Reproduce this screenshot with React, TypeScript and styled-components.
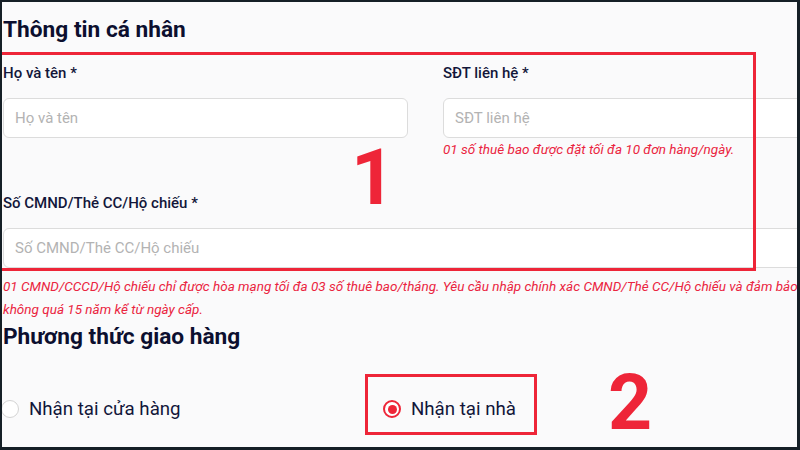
import React from 'react';
import styled, { createGlobalStyle } from 'styled-components';

const red = '#ee2538';
const navy = '#12163a';
const frame = '#151f26';

const GlobalStyle = createGlobalStyle`
  html, body {
    margin: 0;
    padding: 0;
    background: ${frame};
  }
  * {
    box-sizing: border-box;
  }
`;

const Frame = styled.div`
  width: 800px;
  height: 450px;
  background: ${frame};
  padding: 2px 3px 3px 2px;
`;

const Screen = styled.div`
  position: relative;
  height: 100%;
  background: #fafafb;
  overflow: hidden;
  padding-left: 1px;
  font-family: Roboto, 'Noto Sans', sans-serif;
  color: ${navy};
`;

const SectionTitle = styled.h2<{ $top: number }>`
  margin: ${({ $top }) => $top}px 0 0;
  font-size: 22.7px;
  line-height: 28px;
  font-weight: 700;
  color: #0c0f2f;
  white-space: nowrap;
`;

const FieldGrid = styled.div`
  display: grid;
  grid-template-columns: 405px 405px;
  column-gap: 35px;
  row-gap: 36px;
  width: 845px;
  margin-top: 19px;
`;

const Field = styled.div<{ $wide?: boolean }>`
  display: flex;
  flex-direction: column;
  grid-column: ${({ $wide }) => ($wide ? '1 / -1' : 'auto')};
`;

const Label = styled.label`
  font-size: 15px;
  line-height: 20px;
  font-weight: 500;
  margin-bottom: 15px;
  white-space: nowrap;
`;

const Input = styled.input`
  height: 40px;
  width: 100%;
  border: 1px solid #dcdcdc;
  border-radius: 6px;
  background: #fff;
  padding: 0 11px;
  font-family: Roboto, sans-serif;
  font-size: 15px;
  color: ${navy};
  outline: none;

  &::placeholder {
    color: #b3b3b3;
  }
`;

const Note = styled.p<{ $lh: number; $mt: number }>`
  margin: ${({ $mt }) => $mt}px 0 0;
  font-size: 13.5px;
  line-height: ${({ $lh }) => $lh}px;
  font-style: italic;
  color: #ea2440;
  white-space: nowrap;
`;

const RadioRow = styled.div`
  display: grid;
  grid-template-columns: 382px auto;
  margin: 46px 0 0 -2px;
`;

const RadioOption = styled.label`
  display: flex;
  align-items: center;
  gap: 10px;
  height: 24px;
  font-size: 18.7px;
  color: ${navy};
`;

const RadioDot = styled.span<{ $checked?: boolean }>`
  width: 18px;
  height: 18px;
  flex: none;
  border-radius: 50%;
  border: ${({ $checked }) => ($checked ? `2px solid ${red}` : '1.5px solid #d4d4d4')};
  background: #fff;
  display: flex;
  align-items: center;
  justify-content: center;

  &::after {
    content: '';
    width: 9px;
    height: 9px;
    border-radius: 50%;
    background: ${({ $checked }) => ($checked ? red : 'transparent')};
  }
`;

const Marker = styled.div<{ $x: number; $y: number; $w: number; $h: number }>`
  position: absolute;
  left: ${({ $x }) => $x}px;
  top: ${({ $y }) => $y}px;
  width: ${({ $w }) => $w}px;
  height: ${({ $h }) => $h}px;
  border: 3px solid ${red};
  pointer-events: none;
`;

const StepNumber = styled.span<{ $x: number; $y: number }>`
  position: absolute;
  left: ${({ $x }) => $x}px;
  top: ${({ $y }) => $y}px;
  font-family: Roboto, 'Liberation Sans', sans-serif;
  font-weight: 700;
  font-size: 77px;
  line-height: 77px;
  color: ${red};
`;

const App: React.FC = (): JSX.Element => {
  return (
    <>
      <GlobalStyle />
      <Frame>
        <Screen>
          <SectionTitle $top={14}>Thông tin cá nhân</SectionTitle>
          <FieldGrid>
            <Field>
              <Label>Họ và tên *</Label>
              <Input placeholder="Họ và tên" />
            </Field>
            <Field>
              <Label>SĐT liên hệ *</Label>
              <Input placeholder="SĐT liên hệ" />
              <Note $lh={16} $mt={3}>
                01 số thuê bao được đặt tối đa 10 đơn hàng/ngày.
              </Note>
            </Field>
            <Field $wide>
              <Label>Số CMND/Thẻ CC/Hộ chiếu *</Label>
              <Input placeholder="Số CMND/Thẻ CC/Hộ chiếu" />
              <Note $lh={23} $mt={7}>
                01 CMND/CCCD/Hộ chiếu chỉ được hòa mạng tối đa 03 số thuê bao/tháng. Yêu cầu nhập
                chính xác CMND/Thẻ CC/Hộ chiếu và đảm bảo thời hạn
                <br />
                không quá 15 năm kể từ ngày cấp.
              </Note>
            </Field>
          </FieldGrid>

          <SectionTitle $top={2}>Phương thức giao hàng</SectionTitle>
          <RadioRow>
            <RadioOption>
              <RadioDot />
              Nhận tại cửa hàng
            </RadioOption>
            <RadioOption>
              <RadioDot $checked />
              Nhận tại nhà
            </RadioOption>
          </RadioRow>

          <Marker $x={-12} $y={50} $w={766} $h={219} />
          <Marker $x={363} $y={372} $w={172} $h={61} />
          <StepNumber $x={349} $y={138}>1</StepNumber>
          <StepNumber $x={606} $y={363}>2</StepNumber>
        </Screen>
      </Frame>
    </>
  );
};

export default App;
